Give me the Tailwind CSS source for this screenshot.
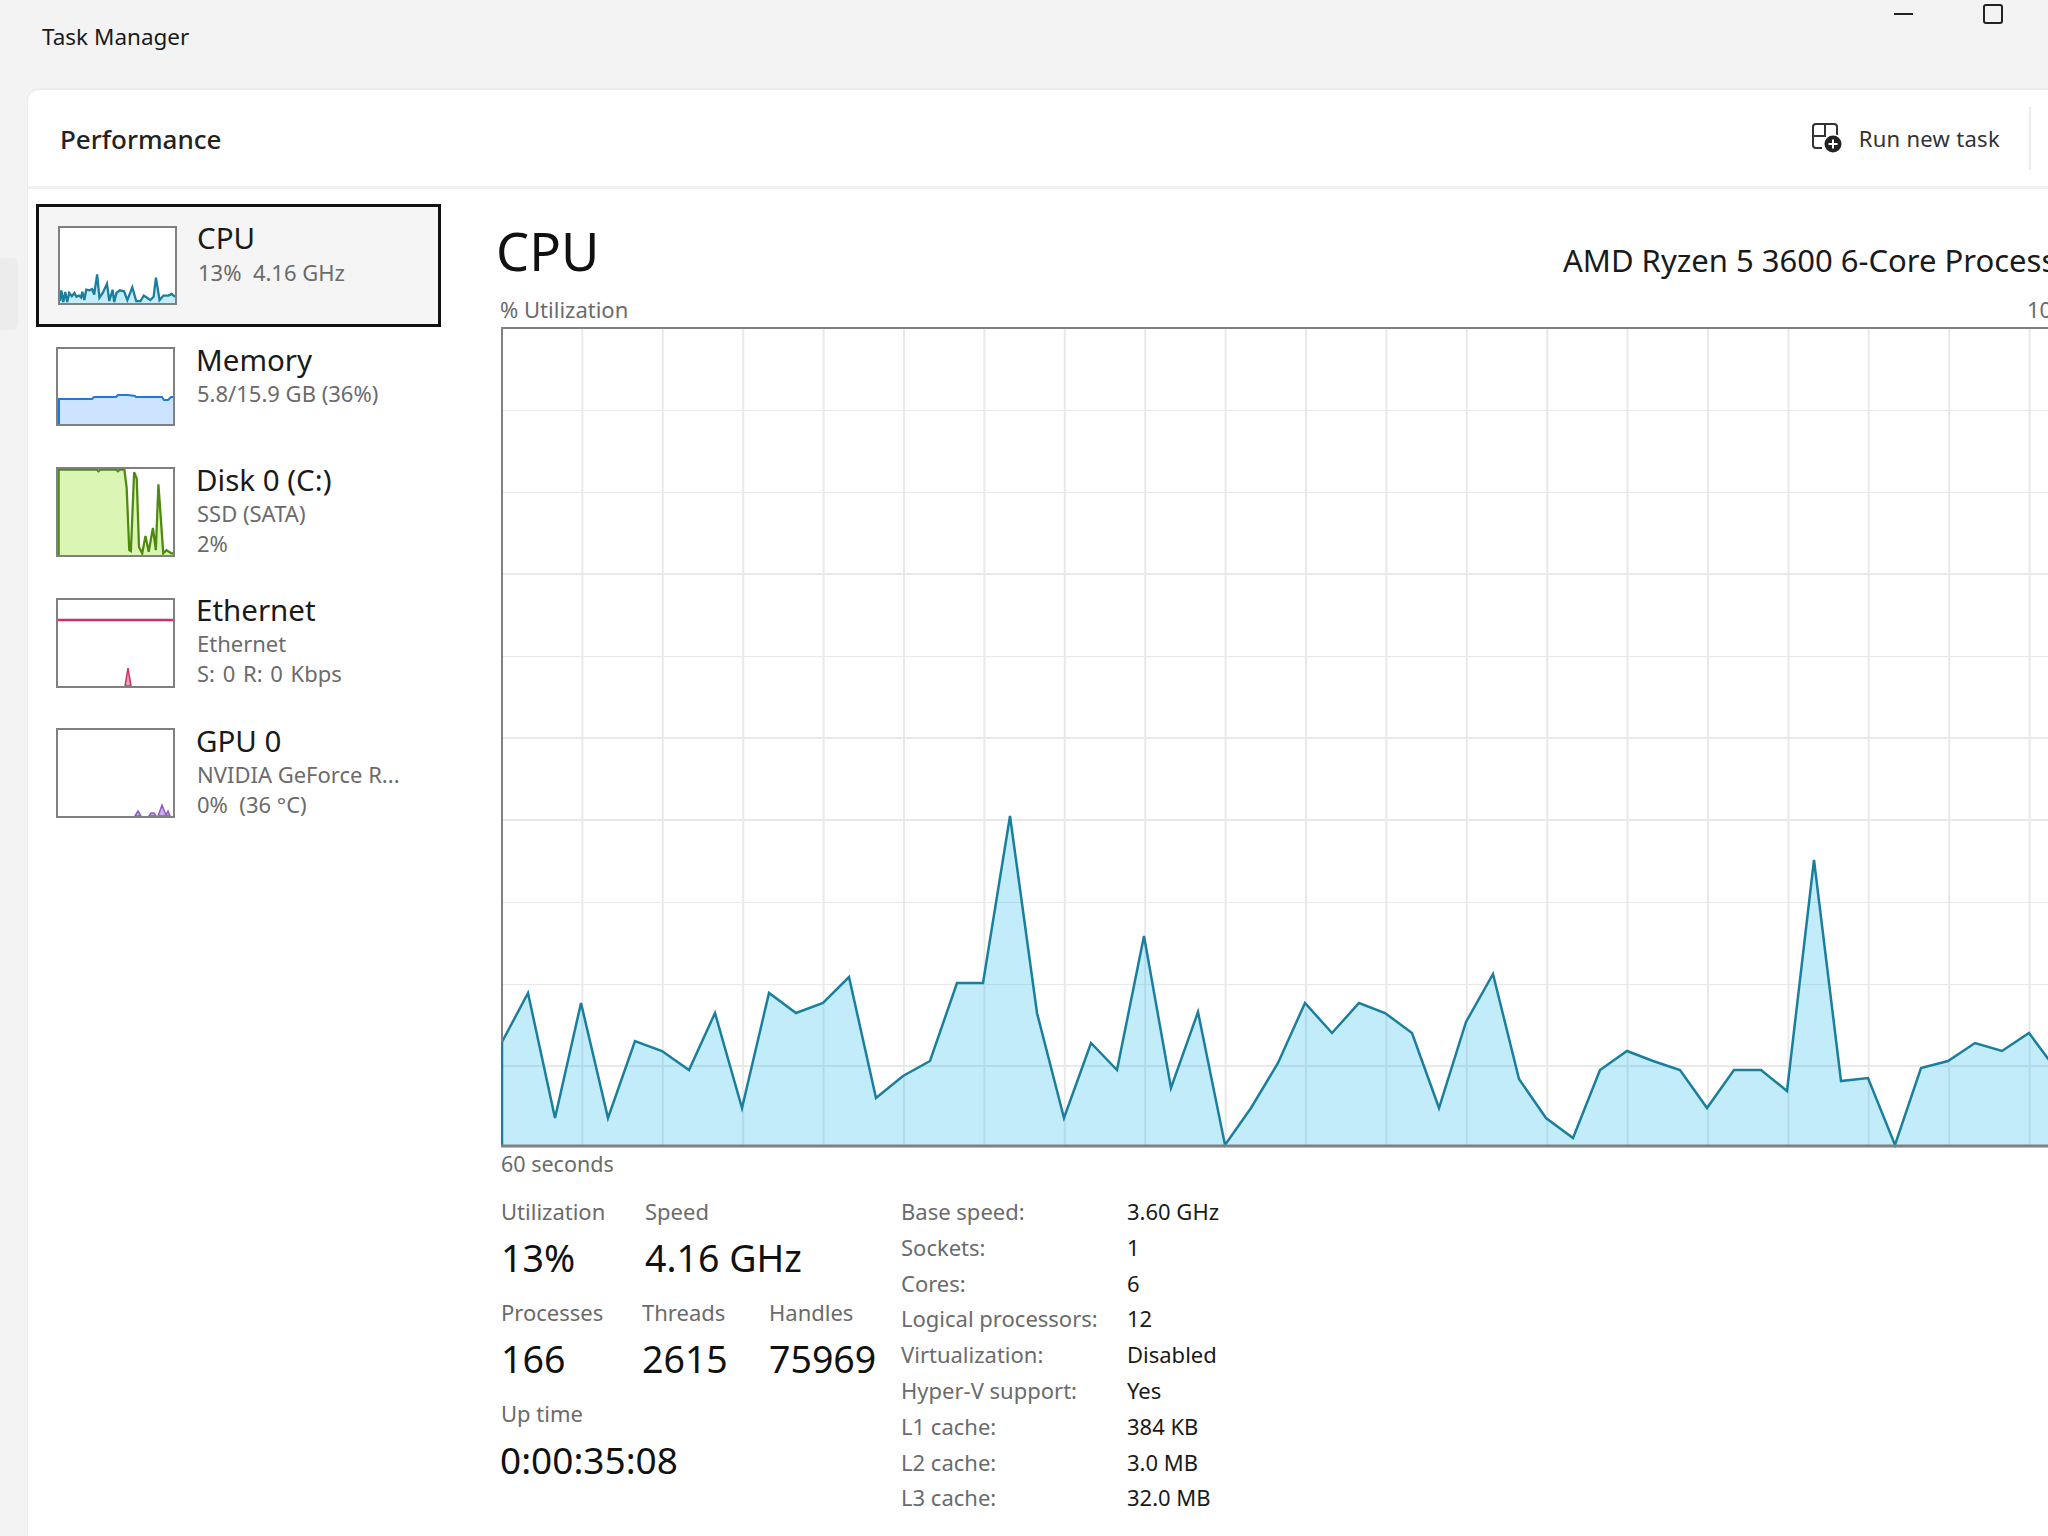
<!DOCTYPE html>
<html lang="en">
<head>
    <meta charset="UTF-8">
    <title>Task Manager</title>
    <script src="https://cdn.jsdelivr.net/npm/@tailwindcss/browser@4"></script>
</head>
<body class="font-['Noto_Sans',sans-serif] overflow-hidden">
<div class="flex w-[2048px] h-[1536px] overflow-hidden bg-[#f3f3f3] text-[#1a1a1a]">

    <!-- nav rail -->
    <div class="w-[27px] shrink-0 pt-[258px]">
        <div class="w-[18px] h-[72px] rounded-r-[6px] bg-[#ececec]"></div>
    </div>

    <div class="flex flex-col w-[2021px] shrink-0">
        <!-- title bar -->
        <div class="flex justify-between h-[88px] shrink-0">
            <div class="pl-[15px] pt-[22px] text-[22.5px] leading-[30px]">Task Manager</div>
            <div class="flex items-start">
                <div class="w-[19px] h-[2px] mt-[13px] bg-[#222]"></div>
                <div class="w-[20px] h-[20px] mt-[4px] ml-[70px] mr-[45px] rounded-[3px] border-2 border-[#222]"></div>
            </div>
        </div>

        <!-- panel -->
        <div class="flex flex-col flex-1 min-h-0 bg-white rounded-tl-[12px] border-t-2 border-l border-[#ececec]">
            <div class="flex items-center justify-between h-[99px] shrink-0 pl-[32px] pr-[17px] border-b-[3px] border-[#f0f0f0]">
                <div class="pt-[2px] text-[26px] font-medium text-[#222]">Performance</div>
                <div class="flex items-center">
                    <svg class="w-[30px] h-[30px] mr-[17px]" viewBox="0 0 30 30" fill="none">
                        <path d="M10 25H4a3 3 0 0 1-3-3V4a3 3 0 0 1 3-3h18a3 3 0 0 1 3 3v8M1 13h13M13 1v12" stroke="#333" stroke-width="2"/>
                        <circle cx="21" cy="21" r="10" fill="#fff"/>
                        <circle cx="21" cy="21" r="8.5" fill="#222"/>
                        <path d="M21 16.500v9M16.500 21h9" stroke="#fff" stroke-width="2"/>
                    </svg>
                    <div class="text-[22px] text-[#333] tracking-[0.3px]">Run new task</div>
                    <div class="w-[2px] h-[63px] ml-[29px] bg-[#ececec]"></div>
                </div>
            </div>

            <div class="flex flex-1 min-h-0">
                <!-- device list -->
                <div class="w-[473px] shrink-0 pt-[15px] pl-[8px]">
                    <div class="flex w-[405px] h-[123px] pt-[19px] pl-[19px] border-[3px] border-[#111] bg-[#f5f5f5]">
                        <svg class="w-[119px] h-[79px] shrink-0 border-2 border-[#808080] bg-white" viewBox="0 0 350 231" preserveAspectRatio="none">
                            <polygon fill="#c4ecfb" points="0,231 0,225 4,192 10,228 16,197 22,228 28,200 36,210 44,200 50,212 58,208 64,214 68,196 74,222 80,190 90,192 98,188 104,205 113,143 120,215 130,200 143,172 150,225 160,190 165,228 172,200 182,192 195,195 205,222 220,183 232,225 245,225 255,208 265,215 275,222 285,212 292,153 303,222 315,208 330,208 340,203 350,212 350,231"/>
                            <polyline fill="none" stroke="#1a7f9c" stroke-width="7" points="0,225 4,192 10,228 16,197 22,228 28,200 36,210 44,200 50,212 58,208 64,214 68,196 74,222 80,190 90,192 98,188 104,205 113,143 120,215 130,200 143,172 150,225 160,190 165,228 172,200 182,192 195,195 205,222 220,183 232,225 245,225 255,208 265,215 275,222 285,212 292,153 303,222 315,208 330,208 340,203 350,212"/>
                        </svg>
                        <div class="pl-[20px] -mt-[7px]">
                            <div class="text-[29.500px] leading-[38px]">CPU</div>
                            <div class="pl-[1px] text-[22px] leading-[30px] text-[#6b6b6b]">13%&nbsp; 4.16 GHz</div>
                        </div>
                    </div>

                    <div class="flex flex-col gap-[40px] pt-[20px] pl-[20px]">
                        <div class="flex mb-[1px]">
                            <svg class="w-[119px] h-[79px] shrink-0 border-2 border-[#808080] bg-white" viewBox="0 0 115 75" preserveAspectRatio="none">
                                <path d="M0 75V50H34L36 48H58L60 46H70L77 47L78 48H104L106 51H110L113 48H115V75Z" fill="#cce4ff"/>
                                <path d="M1 75V50H34L36 48H58L60 46H70L77 47L78 48H104L106 51H110L113 48H115" fill="none" stroke="#2277dd" stroke-width="2"/>
                            </svg>
                            <div class="pl-[21px] -mt-[6px]">
                                <div class="text-[29.500px] leading-[37px]">Memory</div>
                                <div class="pl-[1px] text-[22px] leading-[30px] text-[#6b6b6b]">5.8/15.9 GB (36%)</div>
                            </div>
                        </div>

                        <div class="flex">
                            <svg class="w-[119px] h-[90px] shrink-0 border-2 border-[#808080] bg-white" viewBox="0 0 355 270" preserveAspectRatio="none">
                                <polygon fill="#dbf5b4" points="0,270 0,2 120,2 125,7 130,2 180,2 185,7 190,2 205,2 212,60 220,255 225,258 235,10 243,30 250,245 260,265 270,210 280,260 293,185 302,255 310,48 325,265 335,255 350,265 355,265 355,270"/>
                                <polyline fill="none" stroke="#4f8a10" stroke-width="7" points="2,270 2,2 120,2 125,7 130,2 180,2 185,7 190,2 205,2 212,60 220,255 225,258 235,10 243,30 250,245 260,265 270,210 280,260 293,185 302,255 310,48 325,265 335,255 350,265 355,265"/>
                            </svg>
                            <div class="pl-[21px] -mt-[6px]">
                                <div class="text-[29.500px] leading-[37px]">Disk 0 (C:)</div>
                                <div class="pl-[1px] text-[22px] leading-[30px] text-[#6b6b6b]">SSD (SATA)</div>
                                <div class="pl-[1px] text-[22px] leading-[30px] text-[#6b6b6b]">2%</div>
                            </div>
                        </div>

                        <div class="flex">
                            <svg class="w-[119px] h-[90px] shrink-0 border-2 border-[#808080] bg-white" viewBox="0 0 115 86" preserveAspectRatio="none">
                                <path d="M0 20H115" stroke="#cf2f6b" stroke-width="2.500"/>
                                <path d="M67 86L70 68L73 86Z" fill="#e8a0bb" stroke="#cf2f6b" stroke-width="1.500"/>
                            </svg>
                            <div class="pl-[21px] -mt-[7px]">
                                <div class="text-[29.500px] leading-[37px]">Ethernet</div>
                                <div class="pl-[1px] text-[22px] leading-[30px] text-[#6b6b6b]">Ethernet</div>
                                <div class="pl-[1px] text-[22px] leading-[30px] [word-spacing:2px] text-[#6b6b6b]">S: 0 R: 0 Kbps</div>
                            </div>
                        </div>

                        <div class="flex">
                            <svg class="w-[119px] h-[90px] shrink-0 border-2 border-[#808080] bg-white" viewBox="0 0 115 86" preserveAspectRatio="none">
                                <path d="M77 86L80 81L83 86ZM91 86L93 83H96L98 86ZM100 86L104 75L108 85L110 81L112 86Z" fill="#c8aee6" stroke="#8b5cc9" stroke-width="1.500"/>
                            </svg>
                            <div class="pl-[21px] -mt-[6px]">
                                <div class="text-[29.500px] leading-[37px]">GPU 0</div>
                                <div class="pl-[1px] text-[22px] leading-[30px] text-[#6b6b6b]">NVIDIA GeForce R...</div>
                                <div class="pl-[1px] text-[22px] leading-[30px] text-[#6b6b6b]">0%&nbsp; (36 °C)</div>
                            </div>
                        </div>
                    </div>
                </div>

                <!-- cpu detail -->
                <div class="w-[1608px] shrink-0">
                    <div class="flex h-[106px] pt-[32px]">
                        <div class="w-[1067px] shrink-0 -ml-[5px] text-[52.500px] leading-[60px] text-[#111]">CPU</div>
                        <div class="pt-[19px] text-[31px] leading-[40px] whitespace-nowrap text-[#1a1a1a]">AMD Ryzen 5 3600 6-Core Processor</div>
                    </div>
                    <div class="flex justify-between w-[1583px] h-[28px] -ml-[1px] text-[22px] leading-[28px] text-[#6b6b6b]">
                        <div>% Utilization</div>
                        <div>100%</div>
                    </div>
                    <svg class="block w-[1608px] h-[822px] mt-[4px]" viewBox="501 328 1608 822">
                        <defs>
                            <pattern id="grid" x="501" y="328" width="80.4" height="82" patternUnits="userSpaceOnUse">
                                <path d="M0 0V82M0 0H80.4" stroke="#e9e9e9" stroke-width="4" fill="none"/>
                            </pattern>
                        </defs>
                        <rect x="501" y="328" width="1608" height="819" fill="url(#grid)"/>
                        <g transform="translate(0 1)">
                            <polygon fill="#10b4f0" fill-opacity="0.25" points="501,1146 501,1042 528,993 555,1118 581,1003 608,1118 635,1041 662,1051 689,1070 715,1013 742,1108 769,993 796,1013 823,1003 849,977 876,1098 903,1076 930,1061 957,983 983,983 1010,816 1037,1013 1064,1118 1091,1043 1117,1070 1144,936 1171,1088 1198,1012 1225,1145 1251,1108 1278,1063 1305,1003 1332,1033 1359,1003 1385,1013 1412,1033 1439,1108 1466,1022 1493,974 1519,1079 1546,1118 1573,1138 1600,1070 1627,1051 1653,1061 1680,1070 1707,1108 1734,1070 1761,1070 1787,1091 1814,860 1841,1081 1868,1078 1895,1145 1921,1068 1948,1061 1975,1043 2002,1051 2029,1033 2055,1068 2055,1146"/>
                            <polyline fill="none" stroke="#1a7f9c" stroke-width="2.500" points="502,1146 502,1042 528,993 555,1118 581,1003 608,1118 635,1041 662,1051 689,1070 715,1013 742,1108 769,993 796,1013 823,1003 849,977 876,1098 903,1076 930,1061 957,983 983,983 1010,816 1037,1013 1064,1118 1091,1043 1117,1070 1144,936 1171,1088 1198,1012 1225,1145 1251,1108 1278,1063 1305,1003 1332,1033 1359,1003 1385,1013 1412,1033 1439,1108 1466,1022 1493,974 1519,1079 1546,1118 1573,1138 1600,1070 1627,1051 1653,1061 1680,1070 1707,1108 1734,1070 1761,1070 1787,1091 1814,860 1841,1081 1868,1078 1895,1145 1921,1068 1948,1061 1975,1043 2002,1051 2029,1033 2055,1068"/>
                        </g>
                        <path d="M502 1043V329H2109" fill="none" stroke="#808080" stroke-width="2"/>
                        <path d="M501 1147H2109" fill="none" stroke="#808080" stroke-width="3"/>
                    </svg>
                    <div class="text-[21.500px] leading-[28px] mt-[1px] text-[#6b6b6b]">60 seconds</div>

                    <div class="flex pt-[19px]">
                        <div class="flex flex-col gap-[17px] w-[400px] shrink-0">
                            <div class="grid grid-cols-[144px_1fr]">
                                <div class="text-[22px] leading-[28px] text-[#6b6b6b]">Utilization</div>
                                <div class="text-[22px] leading-[28px] text-[#6b6b6b]">Speed</div>
                                <div class="text-[37.500px] leading-[48px] mt-[9px] text-[#111]">13%</div>
                                <div class="text-[37.500px] leading-[48px] mt-[9px] text-[#111]">4.16 GHz</div>
                            </div>
                            <div class="grid grid-cols-[141px_127px_1fr] -mt-[1px]">
                                <div class="text-[22px] leading-[28px] text-[#6b6b6b]">Processes</div>
                                <div class="text-[22px] leading-[28px] text-[#6b6b6b]">Threads</div>
                                <div class="text-[22px] leading-[28px] text-[#6b6b6b]">Handles</div>
                                <div class="text-[37.500px] leading-[48px] mt-[9px] text-[#111]">166</div>
                                <div class="text-[37.500px] leading-[48px] mt-[9px] text-[#111]">2615</div>
                                <div class="text-[37.500px] leading-[48px] mt-[9px] text-[#111]">75969</div>
                            </div>
                            <div class="-mt-[1px]">
                                <div class="text-[22px] leading-[28px] text-[#6b6b6b]">Up time</div>
                                <div class="text-[37px] leading-[48px] mt-[9px] -ml-[1px] text-[#111]">0:00:35:08</div>
                            </div>
                        </div>
                        <div class="grid grid-cols-[226px_1fr] auto-rows-[35.8px] text-[22px] leading-[28px]">
                            <div class="text-[#6b6b6b]">Base speed:</div><div>3.60 GHz</div>
                            <div class="text-[#6b6b6b]">Sockets:</div><div>1</div>
                            <div class="text-[#6b6b6b]">Cores:</div><div>6</div>
                            <div class="text-[#6b6b6b]">Logical processors:</div><div>12</div>
                            <div class="text-[#6b6b6b]">Virtualization:</div><div>Disabled</div>
                            <div class="text-[#6b6b6b]">Hyper-V support:</div><div>Yes</div>
                            <div class="text-[#6b6b6b]">L1 cache:</div><div>384 KB</div>
                            <div class="text-[#6b6b6b]">L2 cache:</div><div>3.0 MB</div>
                            <div class="text-[#6b6b6b]">L3 cache:</div><div>32.0 MB</div>
                        </div>
                    </div>
                </div>
            </div>
        </div>
    </div>
</div>
</body>
</html>
